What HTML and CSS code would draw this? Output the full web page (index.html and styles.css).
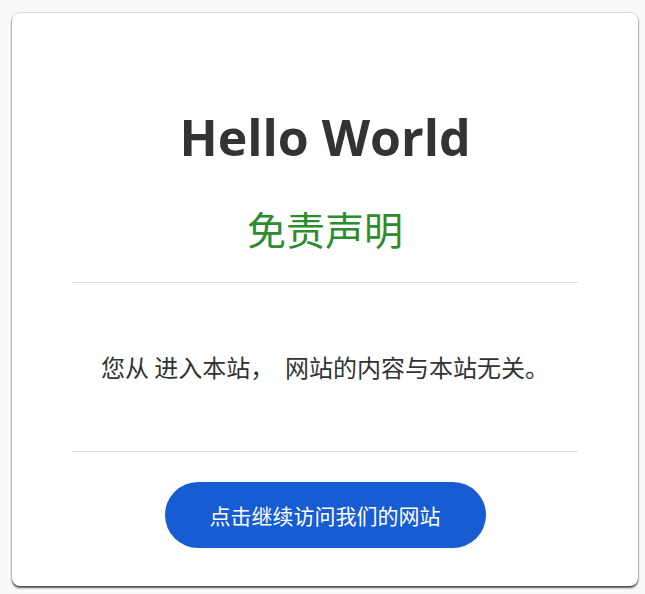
FILE: index.html
```html
<!DOCTYPE html>
<html lang="zh-CN">
<head>
<meta charset="utf-8">
<title>Hello World</title>
<link rel="stylesheet" href="styles.css">
</head>
<body>
<main class="card">
  <h1 class="title">Hello World</h1>
  <h2 class="subtitle">免责声明</h2>
  <hr class="divider">
  <p class="notice">您从 进入本站，&nbsp; 网站的内容与本站无关。</p>
  <hr class="divider">
  <div class="actions">
    <a class="btn" href="#">点击继续访问我们的网站</a>
  </div>
</main>
</body>
</html>
```

FILE: styles.css
```css
html, body {
  margin: 0;
  padding: 0;
}
body {
  background: #f8f9f8;
  font-family: "Open Sans", "Noto Sans CJK SC", sans-serif;
  color: #333;
  padding: 13px 7px 8px 12px;
}
.card {
  background: #fff;
  border-radius: 8px;
  box-shadow: 0 0 1px 1px rgba(0,0,0,0.15), 0 2px 2px rgba(0,0,0,0.65);
  padding: 94px 60px 38px;
  text-align: center;
}
.title {
  margin: 0;
  font-size: 50px;
  line-height: 60px;
  font-weight: 700;
  color: #333;
}
.subtitle {
  margin: 37px 0 0;
  font-family: "Noto Sans CJK SC", sans-serif;
  font-size: 39px;
  line-height: 48px;
  font-weight: 400;
  color: #2d8c2d;
}
.divider {
  border: 0;
  border-top: 1px solid #dddddd;
  margin: 30px 0 0;
}
.notice {
  margin: 68px 0 68px;
  font-family: "Noto Sans CJK SC", sans-serif;
  font-size: 24px;
  line-height: 32px;
  color: #333;
}
.actions {
  margin-top: 30px;
  display: flex;
  justify-content: center;
}
.btn {
  display: flex;
  align-items: center;
  justify-content: center;
  width: 321px;
  height: 66px;
  border-radius: 33px;
  background: #175cd3;
  color: #fff;
  text-decoration: none;
  font-family: "Noto Sans CJK SC", sans-serif;
  font-size: 21px;
}
```
